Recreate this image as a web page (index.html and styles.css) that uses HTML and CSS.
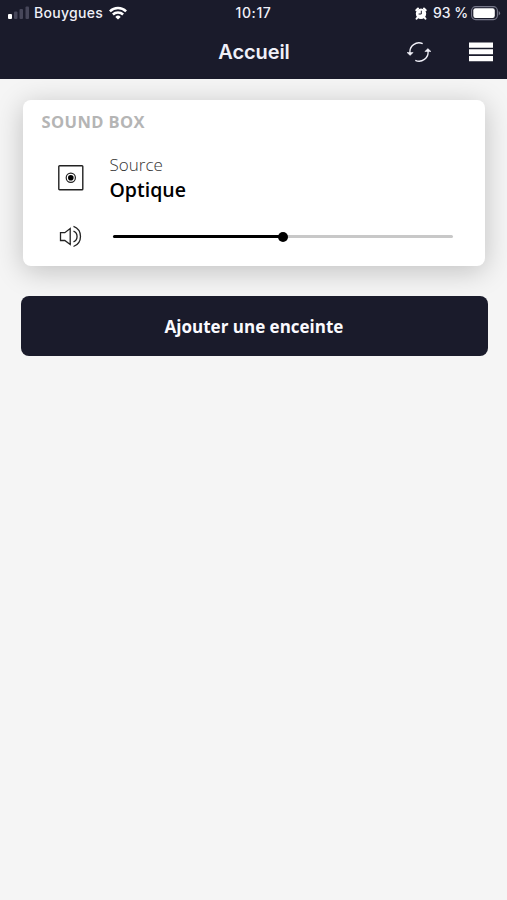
FILE: index.html
```html
<!DOCTYPE html>
<html lang="fr">
<head>
<meta charset="utf-8">
<title>Accueil</title>
<link rel="stylesheet" href="styles.css">
</head>
<body>
<header class="header">
  <div class="status">
    <div class="carrier">
      <svg width="22" height="14" viewBox="0 0 22 14"><rect x="0" y="8" width="4" height="5" rx="1" fill="#fff"/><g fill="#47475a"><rect x="6" y="5.500" width="3.500" height="7.500" rx="1"/><rect x="11.500" y="3" width="3.500" height="10" rx="1"/><rect x="17.500" y=".5" width="3.500" height="12.500" rx="1"/></g></svg>
      <span class="carrier-name">Bouygues</span>
      <svg class="wifi" width="18" height="14" viewBox="0 0 18 14" fill="none" stroke="#fff" stroke-width="2.500"><path d="M.9 5.400a11.500 11.500 0 0 1 16.200 0M3.900 8.500a7.300 7.300 0 0 1 10.200 0"/><path d="M9 13.500 6.300 10.900a3.900 3.900 0 0 1 5.400 0z" fill="#fff" stroke="none"/></svg>
    </div>
    <span class="time">10:17</span>
    <div class="power">
      <svg class="alarm" width="12" height="13" viewBox="0 0 12 13"><circle cx="6" cy="6.700" r="5.200" fill="#fff"/><path d="M1.300 3.200 3 1.500M10.700 3.200 9 1.500M2.500 10.500 1.600 11.700M9.500 10.500l.9 1.200" stroke="#fff" stroke-width="2" stroke-linecap="round"/><path d="M6.300 3.700v3.300H3.600" fill="none" stroke="#1a1b2b" stroke-width="1"/></svg>
      <span class="percent">93 %</span>
      <svg class="battery" width="30" height="15" viewBox="0 0 30 15"><rect x=".6" y=".6" width="25.800" height="13" rx="4" fill="none" stroke="#77788a" stroke-width="1.100"/><rect x="2.300" y="2.300" width="21.500" height="9.600" rx="2.200" fill="#fff"/><path d="M27.700 5v4.400q1.400-.7 1.400-2.200T27.700 5" fill="#77788a"/></svg>
    </div>
  </div>
  <nav class="nav">
    <h1 class="title">Accueil</h1>
    <div class="actions">
      <svg width="24" height="20" viewBox="0 0 24 20"><g fill="none" stroke="#f2f2fa" stroke-width="1.300"><path d="M3 11A9 9 0 0 1 15.700 1.700"/><path d="M21 9A9 9 0 0 1 8.300 18.300"/></g><path d="M0 10.500h6.200L3.100 13.400zM17.800 9.500H24L20.900 6.600z" fill="#f2f2fa" stroke="#f2f2fa" stroke-width=".5"/></svg>
      <svg width="24" height="20" viewBox="0 0 24 20" fill="#fff"><path d="M0 .5h24v5.200H0zM0 7.300h24v5H0zM0 13.900h24v5.400H0z"/></svg>
    </div>
  </nav>
</header>
<main class="content">
  <section class="card">
    <h2 class="card-title">SOUND BOX</h2>
    <div class="source">
      <svg class="source-icon" width="26" height="26" viewBox="0 0 26 26" fill="none" stroke="#222"><rect x=".8" y=".8" width="24" height="24" rx=".8" stroke-width="1.400"/><circle cx="12.800" cy="12.700" r="4.600" stroke-width="1.200"/><circle cx="12.800" cy="12.700" r="2.800" fill="#000" stroke="none"/></svg>
      <div class="source-text"><span class="label">Source</span><strong class="value">Optique</strong></div>
    </div>
    <div class="volume">
      <svg class="speaker" width="24" height="24" viewBox="0 0 24 24" fill="none" stroke="#222" stroke-width="1.300"><path d="M1.500 7.700h4.300L11.200 3.500v16L5.800 15.500H1.500zM11.200 3.500v16M14.500 6.100a5.800 5.800 0 0 1 0 10.700M14.500 1.300a10.800 10.800 0 0 1 0 20.200"/></svg>
      <div class="track"><div class="fill"><span class="thumb"></span></div></div>
    </div>
  </section>
  <button class="add">Ajouter une enceinte</button>
</main>
</body>
</html>
```
FILE: styles.css
```css
* { box-sizing: border-box; }
body { margin: 0; min-height: 100vh; background: #f5f5f5; font-family: "Open Sans", sans-serif; }
svg { display: block; flex: none; }
.header { height: 78.500px; background: #1a1b2b; color: #f0f0f8; font-family: Inter, sans-serif; }
.status { height: 26px; display: grid; grid-template-columns: 1fr auto 1fr; align-items: center; padding: 0 8px; font-size: 14px; font-weight: 500; line-height: 26px; }
.carrier, .power { display: flex; align-items: center; }
.carrier-name { margin-left: 4px; width: 69px; letter-spacing: 0.300px; }
.wifi { margin-left: 6px; }
.time { letter-spacing: 0.600px; }
.power { justify-content: flex-end; }
.percent { margin: 0 3px 0 6px; width: 35px; white-space: nowrap; }
.battery { margin-right: -2px; }
.nav { height: 52px; display: grid; grid-template-columns: 1fr auto 1fr; align-items: center; padding: 0 14px 0 15px; }
.title { grid-column: 2; margin: 0; font-size: 20px; font-weight: 600; line-height: 52px; letter-spacing: -0.100px; }
.actions { display: flex; justify-content: flex-end; gap: 38px; }
.content { padding: 21px 19.500px 0 20.500px; }
.card { height: 166px; margin: 0 2.500px; padding: 10px 32px 0 18.500px; border-radius: 8px; background: #fff; box-shadow: 0 5px 28px rgba(0, 0, 0, 0.220); }
.card-title { margin: 0; font-size: 16.500px; line-height: 24px; font-weight: 700; letter-spacing: 0.400px; color: #b5b5b5; }
.source { display: flex; align-items: center; height: 54px; margin: 17px 0 0 16.500px; }
.source-text { display: flex; flex-direction: column; margin-left: 25.500px; }
.label { font-size: 17px; line-height: 25px; font-weight: 300; color: #333; }
.value { font-size: 19.500px; line-height: 26px; font-weight: 600; color: #000; }
.volume { display: flex; align-items: center; height: 24px; margin: 20px 0 0 17px; }
.track { flex: 1; height: 3px; margin-left: 30px; border-radius: 2px; background: #c8c8c8; }
.fill { position: relative; width: 50%; height: 3px; border-radius: 2px; background: #000; }
.thumb { position: absolute; right: -5px; top: -3.500px; width: 10px; height: 10px; border-radius: 50%; background: #000; }
.add { display: block; width: 100%; height: 60px; margin-top: 30.500px; padding: 1px 0 0; border: 0; border-radius: 8px; background: #1a1b2b; color: #fafaff; font-family: inherit; font-size: 17px; font-weight: 700; }
```
